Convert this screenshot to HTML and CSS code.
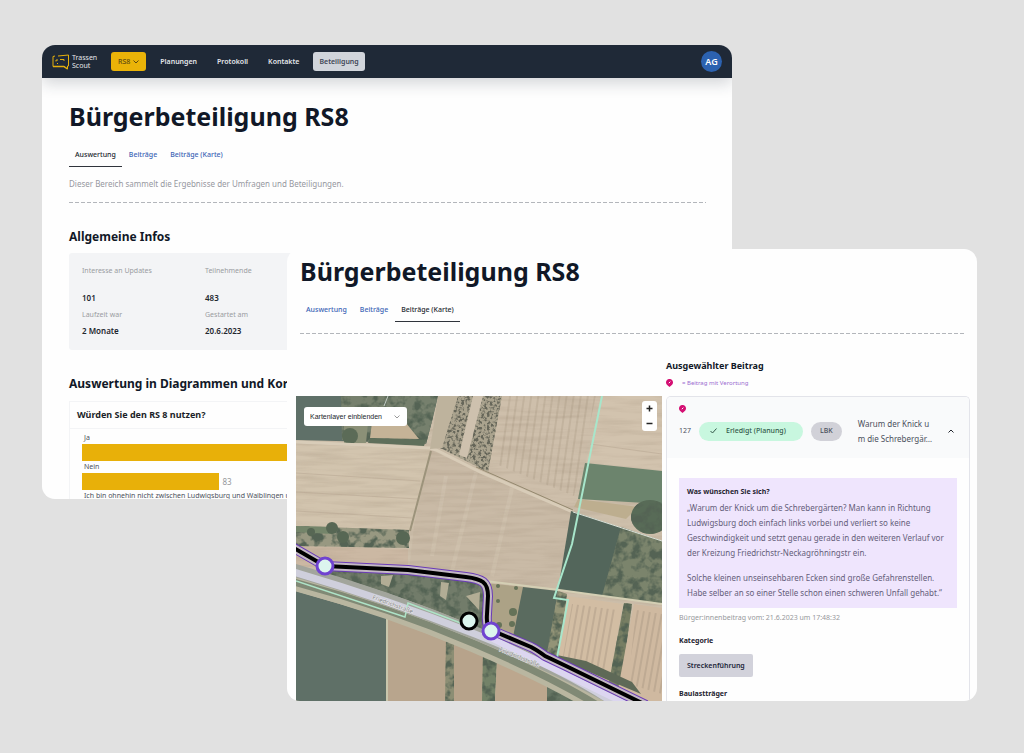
FILE: index.html
```
<!DOCTYPE html>
<html lang="de">
<head>
    <meta charset="UTF-8">
    <meta name="viewport" content="width=device-width, initial-scale=1.0">
    <title>Bürgerbeteiligung RS8 - Trassenscout</title>

    <link rel="stylesheet" href="styles.css">
</head>
<body>
    <div class="stage">
        <section class="window window-back">
            <header class="navbar">
                <a class="brand" href="#">
                    <svg width="18" height="16" viewBox="0 0 18 16" fill="none" stroke="#e5b00c" stroke-width="1" stroke-linejoin="round">
                        <path d="M3 2 1 2.500V12.500h11l3.500 2.500v-3h1V1L6 2"/>
                        <path d="M4 7.500V6h2M8 5.500h4V7M5 9.500h1" stroke-width="1"/>
                        <path d="M1 12.500h11l3.500 2.500" stroke-width="1.500"/>
                    </svg>
                    <span>Trassen<br>Scout</span>
                </a>
                <nav class="nav-links">
                    <button type="button" class="nav-item project">RS8
                        <svg width="6" height="4" viewBox="0 0 6 4" fill="none" stroke="currentColor"><path d="M.5.5 3 3 5.500.5"/></svg>
                    </button>
                    <a class="nav-item" href="#">Planungen</a>
                    <a class="nav-item" href="#">Protokoll</a>
                    <a class="nav-item" href="#">Kontakte</a>
                    <a class="nav-item active" href="#">Beteiligung</a>
                </nav>
                <button type="button" class="avatar">AG</button>
            </header>
            <main class="page">
                <h1>Bürgerbeteiligung RS8</h1>
                <nav class="tabs">
                    <a class="tab current" href="#">Auswertung</a>
                    <a class="tab" href="#">Beiträge</a>
                    <a class="tab" href="#">Beiträge (Karte)</a>
                </nav>
                <p class="intro">Dieser Bereich sammelt die Ergebnisse der Umfragen und Beteiligungen.</p>
                <div class="divider"></div>

                <h2>Allgemeine Infos</h2>
                <dl class="infos">
                    <div class="tall"><dt>Interesse an Updates</dt><dd>101</dd></div>
                    <div class="tall"><dt>Teilnehmende</dt><dd>483</dd></div>
                    <div><dt>Laufzeit war</dt><dd>2 Monate</dd></div>
                    <div><dt>Gestartet am</dt><dd>20.6.2023</dd></div>
                </dl>

                <h2>Auswertung in Diagrammen und Korrelationen</h2>
                <div class="chart-card">
                    <h3>Würden Sie den RS 8 nutzen?</h3>
                    <div class="chart">
                        <p>Ja</p>
                        <div class="bar-row"><div class="bar" style="width: 80%"></div></div>
                        <p>Nein</p>
                        <div class="bar-row"><div class="bar" style="width: 22.500%"></div><span>83</span></div>
                        <p>Ich bin ohnehin nicht zwischen Ludwigsburg und Waiblingen unterwegs</p>
                    </div>
                </div>
            </main>
        </section>

        <section class="window window-front">
            <div class="front-head">
                <h1>Bürgerbeteiligung RS8</h1>
                <nav class="tabs">
                    <a class="tab" href="#">Auswertung</a>
                    <a class="tab" href="#">Beiträge</a>
                    <a class="tab current" href="#">Beiträge (Karte)</a>
                </nav>
                <div class="divider"></div>
            </div>
            <div class="workspace">
                <div class="selected-head">
                    <h2>Ausgewählter Beitrag</h2>
                    <p class="legend">
                        <svg class="pin" viewBox="0 0 7 8"><path d="M3.500 0A3.300 3.300 0 0 1 7 3.400C7 5.500 5 6.500 3.500 8 2 6.500 0 5.500 0 3.400A3.300 3.300 0 0 1 3.500 0z" fill="#d40f73"/><path d="m2.800 4.200 1.500-1.500" stroke="#fff"/></svg>
                        = Beitrag mit Verortung
                    </p>
                </div>

                <div class="map">
                    <svg class="aerial" viewBox="0 0 366 305" preserveAspectRatio="xMidYMid slice">
                        <defs>
                            <filter id="woods" x="0" y="0" width="100%" height="100%" color-interpolation-filters="sRGB">
                                <feTurbulence type="fractalNoise" baseFrequency=".11" numOctaves="3" seed="8"/>
                                <feColorMatrix values="0 0 0 0 .33  0 0 0 0 .39  0 0 0 0 .33  4 0 0 0 -1.700"/>
                                <feComposite in2="SourceGraphic" operator="in" result="n"/>
                                <feMerge><feMergeNode in="SourceGraphic"/><feMergeNode in="n"/></feMerge>
                            </filter>
                            <filter id="rubble" x="0" y="0" width="100%" height="100%" color-interpolation-filters="sRGB">
                                <feTurbulence type="fractalNoise" baseFrequency=".35" numOctaves="2" seed="3"/>
                                <feColorMatrix values="0 0 0 0 .4  0 0 0 0 .4  0 0 0 0 .35  5 0 0 0 -2.300"/>
                                <feComposite in2="SourceGraphic" operator="in" result="n"/>
                                <feMerge><feMergeNode in="SourceGraphic"/><feMergeNode in="n"/></feMerge>
                            </filter>
                            <filter id="soil" x="0" y="0" width="100%" height="100%" color-interpolation-filters="sRGB">
                                <feTurbulence type="fractalNoise" baseFrequency=".02 .2" numOctaves="3" seed="5"/>
                                <feColorMatrix values="0 0 0 0 .55  0 0 0 0 .48  0 0 0 0 .4  1.500 0 0 0 -.600"/>
                            </filter>
                            <pattern id="rows" width="7" height="20" patternUnits="userSpaceOnUse" patternTransform="rotate(8)">
                                <path d="M2 0v20" stroke="#ab9b85" stroke-width="1.500"/>
                            </pattern>
                            <pattern id="rows-wide" width="6" height="20" patternUnits="userSpaceOnUse" patternTransform="rotate(10)">
                                <path d="M2 0v20" stroke="#a99783" stroke-width="2"/>
                            </pattern>
                        </defs>

                        <!-- fields -->
                        <path d="M0 0h366v305H0z" fill="#cdbfab"/>
                        <path d="M0 48 134 53 116 134 0 130z" fill="#d2c4ae"/>
                        <path d="M134 54 184 76 275 116 263 193 190 185 113 176 118 130z" fill="#c9baa6"/>
                        <path d="M206 0H304L275 114 190 76z" fill="#cebfab"/>
                        <path d="M212 0H300L278 100 200 68z" fill="url(#rows)" opacity=".45"/>
                        <path d="M306 0h60v74l-76-8z" fill="#d2c3ae"/>
                        <path d="M150 80 136 160M180 76 156 175M216 92 196 180" stroke="#d3c6b3" stroke-width="4" opacity=".5"/>
                        <path d="M0 150 112 153v24L0 170z" fill="#cbb8a3"/>
                        <path d="M0 0h366v305H0z" filter="url(#soil)" opacity=".25"/>
                        <path d="M0 77 124 85M0 96 122 103M294 48 366 58M0 115 116 122" stroke="#b9a994" fill="none" opacity=".6"/>

                        <!-- upper left gardens -->
                        <path d="M0 0H142L136 25 130 48 80 46 0 44z" fill="#5f7068"/>
                        <path d="M45 0H142L136 25 130 48 80 46 46 44z" fill="#76806d" filter="url(#woods)"/>
                        <path d="M48 27h24l-2 20H48z" fill="#8b9077"/>
                        <circle cx="54" cy="40" r="8" fill="#5b6b57"/>
                        <path d="m76 26 34 1 13 16-49-1z" fill="#c5b397"/>
                        <path d="m74 42 56 2-2 6-56-3z" fill="#5f6f5b"/>
                        <path d="m92 0-4 10" stroke="#c4cdc6"/>
                        <path d="M0 46 134 52 140 54 184 76 277 116" stroke="#d8ccb8" stroke-width="3" fill="none"/>
                        <path d="M180 71 277 114" stroke="#94896f" fill="none"/>
                        <path d="M135 55 114 135" stroke="#9c937b" stroke-width="2"/>

                        <!-- tracks and rubble -->
                        <path d="m160 0h46l-14 76-48-24z" fill="#aaa38e" filter="url(#rubble)"/>
                        <path d="M142 0h20l-16 52-12 1z" fill="#beb39d"/>
                        <path d="M177 0h10l-16 62-8-3z" fill="#cec1ae"/>

                        <!-- garden strip -->
                        <path d="m0 130 113 4v18L0 150z" fill="#989881" filter="url(#woods)"/>
                        <path d="m0 130 40 1-4 7-36-2z" fill="#74856a"/>
                        <g fill="#576754"><circle cx="36" cy="132" r="6"/><circle cx="47" cy="141" r="6"/><circle cx="107" cy="142" r="7"/><circle cx="15" cy="136" r="4"/></g>

                        <!-- right side meadows and woods -->
                        <path d="m289 67 77 8v33l-84-5z" fill="#6c846d"/>
                        <path d="m282 103 60 8-12 12-52-12z" fill="#bdae8f"/>
                        <path d="m275 115 91 30v63l-104-14z" fill="#53665b"/>
                        <path d="m325 131 41 14v63l-60-8z" fill="#7b846c" filter="url(#woods)"/>
                        <ellipse cx="354" cy="121" rx="19" ry="17" fill="#586b57" filter="url(#woods)"/>
                        <path d="M277 116 366 145" stroke="#dce3da" fill="none"/>
                        <path d="M190 185 263 194 366 208" stroke="#d4cfb4" stroke-width="2" fill="none"/>

                        <!-- lower right parcels -->
                        <path d="m188 187 40 4-10 60-28-14z" fill="#aca286"/>
                        <g fill="#657258"><circle cx="217" cy="216" r="4"/><circle cx="220" cy="192" r="2"/><circle cx="202" cy="205" r="2"/><circle cx="203" cy="229" r="3"/><circle cx="216" cy="228" r="3"/><circle cx="202" cy="190" r="2"/></g>
                        <path d="m227 191 35 4-10 64-36-13z" fill="#5a6b5f"/>
                        <path d="m262 195 9 3-8 64-12-5z" fill="#939477" filter="url(#woods)"/>
                        <path d="m271 200 56 8-14 79-51-24z" fill="#d2bda3"/>
                        <path d="m276 208 45 6-12 65-42-19z" fill="url(#rows-wide)" opacity=".45"/>
                        <path d="m328 207 8 1-12 88-12-5z" fill="#777e63" filter="url(#woods)"/>
                        <path d="m338 208 28 4v93h-18l-26-12z" fill="#cfb9a0"/>
                        <path d="m340 214 26 4v80l-34-10z" fill="url(#rows-wide)" opacity=".45"/>

                        <!-- wood between route and road -->
                        <path d="M24 172 115 177 184 186 192 206 188 238 110 210 20 180z" fill="#727c6a" filter="url(#woods)"/>
                        <path d="m85 180 12-1-4 12-8-3zM145 186l8 1-3 17-6-4zM170 200l14-4-1 18z" fill="#b2ad95"/>
                        <path d="M246 256 290 265 336 286 345 298z" fill="#5e6957"/>

                        <!-- fields south of the road -->
                        <path d="m0 195 91 27v83H0z" fill="#5f7067"/>
                        <path d="m92 222 60 24v59H92z" fill="#b8a58d"/>
                        <path d="m150 244 8 3v58h-9z" fill="#8c8e74" filter="url(#woods)"/>
                        <path d="m158 247 30 12v46h-30z" fill="#b7a38b"/>
                        <path d="m187 258 14 7-2 40h-13z" fill="#738268" filter="url(#woods)"/>
                        <path d="m201 264 50 24v17h-52z" fill="#bca78e"/>
                        <path d="m251 284 42 21h-42z" fill="#687765" filter="url(#woods)"/>
                        <path d="M91 221v84" stroke="#c8c6ac" stroke-width="2"/>

                        <!-- Friedrichstraße -->
                        <g fill="none">
                            <path d="M-6 181Q90 206 179 244T320 316" stroke="#b9b6a0" stroke-width="25"/>
                            <path d="M-6 185Q90 210 179 248T315 318" stroke="#808975" stroke-width="7"/>
                            <path d="M-6 173Q90 200 179 237T326 308" stroke="#a2a59c" stroke-width="13"/>
                            <path d="M-6 175Q90 203 179 238T322 310" stroke="#cfcfdc" stroke-width="7"/>
                            <path d="M195 242 246 267 330 308" stroke="#dcd6f0" stroke-width="6"/>
                            <path d="m0 185 109 36 3-14 58 22" stroke="#aee3c7" stroke-width="1.500"/>
                            <path d="m306 0-30 148-18 54 14 2-11 58" stroke="#a8e6cb" stroke-width="2"/>
                        </g>
                        <text class="road-label" transform="translate(76 203) rotate(20)">Friedrichstraße</text>
                        <text class="road-label" transform="translate(203 255) rotate(22)">Friedrichstraße</text>

                        <!-- route -->
                        <g fill="none" stroke-linejoin="round">
                            <path d="M-4 151 29 170 112 174 170 181C186 183 192 186 192 200L191 218Q190 231 195 234L235 251Q241 254 249 260L270 270 350 309" stroke="#6a3bb8" stroke-width="10"/>
                            <path d="M-4 151 29 170 112 174 170 181C186 183 192 186 192 200L191 218Q190 231 195 234L235 251Q241 254 249 260L270 270 350 309" stroke="#c3b8c4" stroke-width="8"/>
                            <path d="M-4 151 29 170 112 174 170 181C186 183 192 186 192 200L191 218Q190 231 195 234L235 251Q241 254 249 260L270 270 350 309" stroke="#000" stroke-width="4"/>
                        </g>
                        <g fill="#dcf5ee" stroke-width="3">
                            <circle cx="29" cy="170" r="8" stroke="#7043d0"/>
                            <circle cx="195" cy="235" r="8" stroke="#7043d0"/>
                            <circle cx="173" cy="225" r="8" stroke="#000"/>
                        </g>
                    </svg>
                    <select class="layer-select" aria-label="Kartenlayer"><option>Kartenlayer einblenden</option></select>
                    <div class="zoom">
                        <button type="button" aria-label="Vergrößern"><svg viewBox="0 0 7 7"><path d="M3.500.5v6M.5 3.500h6"/></svg></button>
                        <button type="button" aria-label="Verkleinern"><svg viewBox="0 0 7 7"><path d="M.5 3.500h6"/></svg></button>
                    </div>
                </div>

                <article class="entry">
                    <header class="entry-head">
                        <svg class="pin" viewBox="0 0 7 8"><path d="M3.500 0A3.300 3.300 0 0 1 7 3.400C7 5.500 5 6.500 3.500 8 2 6.500 0 5.500 0 3.400A3.300 3.300 0 0 1 3.500 0z" fill="#d40f73"/><path d="m2.800 4.200 1.500-1.500" stroke="#fff"/></svg>
                        <div class="entry-row">
                            <span class="entry-id">127</span>
                            <span class="badge done">
                                <svg width="7" height="6" viewBox="0 0 7 6" fill="none" stroke="currentColor"><path d="m.5 3 2 2 4-4.500"/></svg>
                                Erledigt (Planung)
                            </span>
                            <span class="badge">LBK</span>
                            <p class="excerpt">Warum der Knick u<br>m die Schrebergär…</p>
                            <button type="button" class="toggle" aria-label="Zuklappen"><svg width="6" height="4" viewBox="0 0 6 4" fill="none" stroke="currentColor"><path d="M.5 3.500 3 1l2.500 2.500"/></svg></button>
                        </div>
                    </header>
                    <div class="entry-body">
                        <blockquote class="quote">
                            <h4>Was wünschen Sie sich?</h4>
                            <p>„Warum der Knick um die Schrebergärten? Man kann in Richtung<br>Ludwigsburg doch einfach links vorbei und verliert so keine<br>Geschwindigkeit und setzt genau gerade in den weiteren Verlauf vor<br>der Kreizung Friedrichstr-Neckagröhningstr ein.</p>
                            <p>Solche kleinen unseinsehbaren Ecken sind große Gefahrenstellen.<br>Habe selber an so einer Stelle schon einen schweren Unfall gehabt.“</p>
                        </blockquote>
                        <p class="meta">Bürger:innenbeitrag vom: 21.6.2023 um 17:48:32</p>
                        <h4>Kategorie</h4>
                        <span class="category">Streckenführung</span>
                        <h4>Baulastträger</h4>
                    </div>
                </article>
            </div>
        </section>
    </div>
</body>
</html>
```
FILE: styles.css
```
* {
    box-sizing: border-box;
}
body {
    margin: 0;
    background-color: #e1e1e1;
    color: #4b505b;
    font-family: "Noto Sans", sans-serif;
    font-size: 8px;
    line-height: 12px;
}
h1, h2, h3, h4, p, dl, dd, blockquote {
    margin: 0;
}
a {
    color: inherit;
    text-decoration: none;
}
button {
    border: none;
    padding: 0;
    font: inherit;
    cursor: pointer;
}
svg {
    display: block;
}
h1 {
    color: #111827;
    font-size: 25px;
    line-height: 32px;
}
h2 {
    color: #111827;
    font-size: 12px;
    line-height: 16px;
}
h4 {
    color: #1f2430;
    font-size: 7px;
    line-height: 12px;
}

/* two overlapping windows */
.stage {
    position: relative;
    min-height: 100vh;
    overflow: hidden;
}
.window {
    position: absolute;
    overflow: hidden;
    border-radius: 13px;
    background-color: #fefefe;
}
.window-back {
    top: 45px;
    bottom: 254px;
    left: 42px;
    right: 292px;
}
.window-front {
    top: 249px;
    bottom: 52px;
    left: 287px;
    right: 47px;
    display: flex;
    flex-direction: column;
}

.navbar {
    display: flex;
    align-items: center;
    height: 33px;
    padding: 0 10px;
    background-color: #1f2937;
    color: #e5e7eb;
    box-shadow: 0 5px 16px rgba(31, 41, 55, 0.2);
}
.brand {
    display: flex;
    align-items: center;
    gap: 2px;
    width: 59px;
    font-size: 7px;
    line-height: 8px;
}
.nav-links {
    display: flex;
    flex: 1;
    gap: 8px;
}
.nav-item {
    display: flex;
    align-items: center;
    gap: 3px;
    height: 19px;
    padding: 0 6px;
    border-radius: 3px;
    color: #e5e7eb;
    font-size: 7px;
    font-weight: 600;
}
.nav-item.project {
    padding: 0 7px;
    background-color: #eab308;
    color: #5d4a10;
    font-weight: 500;
}
.nav-item.active {
    background-color: #d1d5db;
    color: #3f4656;
}
.avatar {
    width: 21px;
    height: 21px;
    border-radius: 50%;
    background-color: #2c62b0;
    color: #fff;
    font-size: 9px;
    font-weight: 600;
}

.page {
    padding: 22px 26px 0 27px;
}
.tabs {
    display: flex;
    gap: 1px;
    margin-top: 17px;
    font-size: 7px;
    font-weight: 500;
}
.tab {
    padding: 0 6px 5px;
    border-bottom: 1px solid transparent;
    color: #3b64b5;
}
.tab.current {
    border-color: #30343c;
    color: #22262e;
}
.intro {
    margin-top: 11px;
    color: #96989e;
}
.divider {
    height: 1px;
    margin-top: 12px;
    background: repeating-linear-gradient(90deg, #b3b6bb 0 4px, transparent 4px 6px);
}
.page h2 {
    margin-top: 26px;
}
.infos {
    display: grid;
    grid-template-columns: 123px 123px;
    align-content: start;
    height: 97px;
    margin-top: 8px;
    padding: 12px 13px 0;
    border-radius: 3px;
    background-color: #f3f4f6;
}
.infos dt {
    color: #9a9ca1;
    font-size: 7px;
}
.infos dd {
    margin-top: 4px;
    color: #22262e;
    font-weight: 600;
}
.infos .tall dd {
    margin-top: 15px;
}
.infos .tall {
    height: 44px;
}
.chart-card {
    margin-top: 9px;
    border: 1px solid #f3f4f6;
}
.chart-card h3 {
    padding: 5px 7px;
    color: #1b1f28;
    font-size: 9px;
    line-height: 16px;
}
.chart {
    padding: 3px 12px;
    border-top: 1px solid #f3f4f6;
    font-size: 7px;
}
.chart p {
    padding-left: 2px;
}
.bar-row {
    display: flex;
    align-items: center;
    gap: 3px;
    height: 17px;
    color: #96989c;
    font-size: 8px;
}
.bar {
    height: 100%;
    background-color: #e8b009;
}

.front-head {
    padding: 6px 13px 0;
}
.front-head .divider {
    margin-top: 11px;
}
.workspace {
    display: grid;
    flex: 1;
    grid-template-columns: 1fr 304px;
    grid-template-rows: auto 1fr;
    column-gap: 4px;
    min-height: 0;
    padding: 24px 7px 0 9px;
}
.selected-head {
    grid-column: 2;
    height: 38px;
}
.selected-head h2 {
    font-size: 9px;
}
.legend {
    display: flex;
    align-items: center;
    gap: 9px;
    margin-top: 3px;
    color: #9a6bd0;
    font-size: 6px;
}
.pin {
    flex: none;
    width: 7px;
    height: 8px;
}
.map {
    position: relative;
    overflow: hidden;
}
.aerial {
    width: 100%;
    height: 100%;
}
.road-label {
    fill: #85858a;
    stroke: #e6e6e6;
    stroke-width: 1px;
    paint-order: stroke;
    font-size: 6px;
}
.layer-select {
    position: absolute;
    top: 11px;
    left: 8px;
    width: 103px;
    height: 19px;
    padding: 0 6px;
    border: none;
    border-radius: 3px;
    appearance: none;
    background: #fff url("data:image/svg+xml,%3Csvg xmlns='http://www.w3.org/2000/svg' viewBox='0 0 6 4' fill='none' stroke='%23999'%3E%3Cpath d='M.5.5 3 3 5.5.5'/%3E%3C/svg%3E") no-repeat right 7px center / 6px 4px;
    color: #22262e;
    font-family: "Liberation Sans", Arial, sans-serif;
    font-size: 7px;
}
.zoom {
    position: absolute;
    top: 5px;
    right: 5px;
    width: 15px;
    border-radius: 3px;
    background-color: #fff;
}
.zoom button {
    display: flex;
    align-items: center;
    justify-content: center;
    width: 100%;
    height: 15px;
    background: none;
}
.zoom svg {
    width: 7px;
    fill: none;
    stroke: #222;
    stroke-width: 1.5px;
}

.entry {
    overflow: hidden;
    border: 1px solid #e3e4ea;
    border-bottom: none;
    border-radius: 5px 5px 0 0;
}
.entry-head {
    height: 61px;
    padding: 8px 12px 0;
    background-color: #f9fafb;
}
.entry-row {
    display: flex;
    align-items: center;
    margin-top: 3px;
}
.entry-id {
    width: 20px;
    font-size: 7px;
}
.badge {
    display: flex;
    align-items: center;
    gap: 9px;
    height: 19px;
    margin-right: 8px;
    padding: 0 9px;
    border-radius: 10px;
    background-color: #d1d1d8;
    font-size: 7px;
    font-weight: 500;
}
.badge.done {
    padding: 0 17px 0 11px;
    background-color: #c8f7df;
    color: #33594a;
}
.excerpt {
    flex: 1;
    margin-left: 8px;
    line-height: 15px;
    white-space: nowrap;
}
.toggle {
    width: 12px;
    background: none;
    color: #22262e;
}
.toggle svg {
    margin: 0 auto;
}
.entry-body {
    padding: 20px 12px 0;
}
.quote {
    padding: 8px;
    background-color: #efe5fd;
    color: #655e7a;
    line-height: 15px;
    white-space: nowrap;
}
.quote p {
    margin-top: 2px;
}
.quote p + p {
    margin-top: 10px;
}
.meta {
    margin-top: 4px;
    color: #96989c;
    font-size: 7px;
}
.entry-body > h4 {
    margin-top: 11px;
}
.category {
    display: inline-block;
    margin-top: 7px;
    padding: 6px 8px 5px;
    border-radius: 2px;
    background-color: #d2d2db;
    color: #22263a;
    font-size: 7px;
    font-weight: 600;
}
```
